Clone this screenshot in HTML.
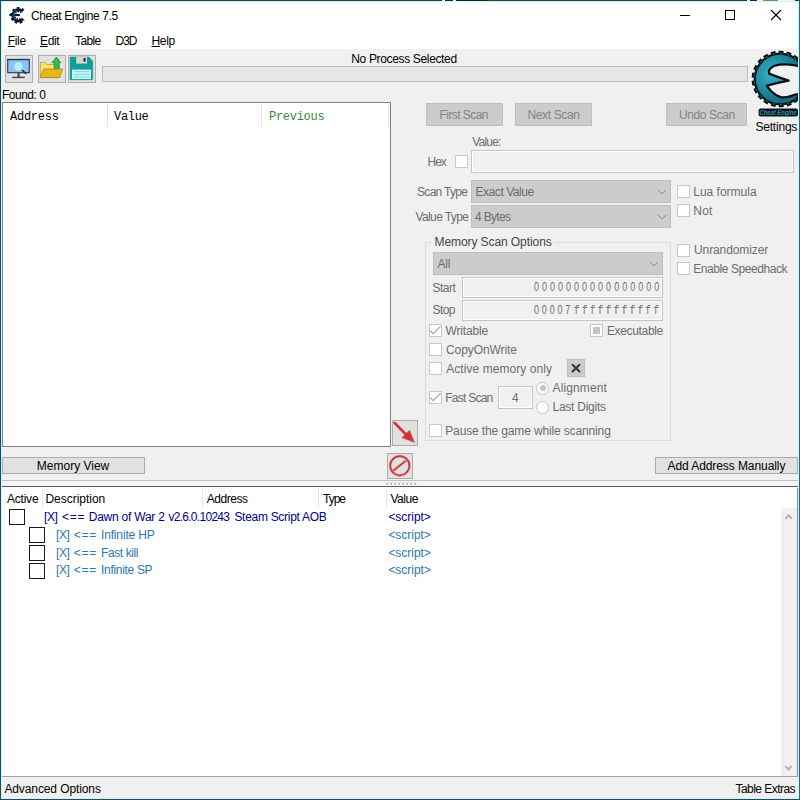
<!DOCTYPE html>
<html>
<head>
<meta charset="utf-8">
<title>Cheat Engine 7.5</title>
<style>
html,body{margin:0;padding:0;}
body{width:800px;height:800px;overflow:hidden;background:#f0f0f0;position:relative;
 font-family:"Liberation Sans",sans-serif;font-size:12px;color:#000;}
.a{position:absolute;white-space:nowrap;box-sizing:border-box;}
.t{position:absolute;white-space:nowrap;line-height:16px;height:16px;font-size:12px;}
.btn{position:absolute;box-sizing:border-box;background:#e1e1e1;border:1px solid #adadad;}
.dbtn{position:absolute;box-sizing:border-box;background:#cccccc;border:1px solid #bfbfbf;}
.cb{position:absolute;box-sizing:border-box;width:13px;height:13px;background:#fff;border:1px solid #c8c8c8;}
.cbk{position:absolute;box-sizing:border-box;width:16px;height:16px;background:#fff;border:1px solid #1c1c1c;}
.combo{position:absolute;box-sizing:border-box;background:#cccccc;border:1px solid #bfbfbf;}
.inp{position:absolute;box-sizing:border-box;background:#f0f0f0;border:1px solid #c4c4c4;box-shadow:inset 0 0 0 1px #fff;}
.mono{font-family:"Liberation Mono",monospace;}
.sep{position:absolute;width:1px;background:#e5e5e5;}
svg{position:absolute;overflow:visible;}
u{text-decoration-thickness:1px;text-underline-offset:1px;}
</style>
</head>
<body>
<!-- title + menu background -->
<div class="a" style="left:0;top:0;width:800px;height:49px;background:#fff;"></div>

<!-- toolbar -->
<div class="btn" style="left:5px;top:55px;width:28px;height:28px;"></div>
<div class="btn" style="left:38px;top:55px;width:28px;height:28px;"></div>
<div class="btn" style="left:68px;top:55px;width:28px;height:28px;"></div>
<div class="a" style="left:102px;top:66px;width:646px;height:16px;background:#e6e6e6;border:1px solid #bcbcbc;"></div>

<!-- found list -->
<div class="a" style="left:2px;top:102px;width:389px;height:345px;background:#fff;border:1px solid #828282;"></div>
<div class="sep" style="left:107px;top:104px;height:23px;"></div>
<div class="sep" style="left:261px;top:104px;height:23px;"></div>
<div class="sep" style="left:388px;top:104px;height:23px;"></div>

<!-- scan buttons -->
<div class="dbtn" style="left:426px;top:103px;width:77px;height:23px;"></div>
<div class="dbtn" style="left:515px;top:103px;width:77px;height:23px;"></div>
<div class="dbtn" style="left:666px;top:103px;width:81px;height:23px;"></div>

<div class="cb" style="left:455px;top:155px;"></div>
<div class="inp" style="left:471px;top:150px;width:323px;height:23px;"></div>

<div class="combo" style="left:471px;top:180px;width:200px;height:23px;"></div>
<div class="combo" style="left:471px;top:205px;width:200px;height:23px;"></div>

<div class="cb" style="left:677px;top:185px;"></div>
<div class="cb" style="left:677px;top:204px;"></div>
<div class="cb" style="left:677px;top:244px;"></div>
<div class="cb" style="left:677px;top:262px;"></div>

<!-- group box -->
<div class="a" style="left:425px;top:242px;width:246px;height:199px;border:1px solid #dcdcdc;"></div>
<div class="a" style="left:432px;top:238px;width:122px;height:10px;background:#f0f0f0;"></div>
<div class="combo" style="left:433px;top:252px;width:230px;height:23px;"></div>
<div class="inp" style="left:462px;top:277px;width:201px;height:21px;"></div>
<div class="inp" style="left:462px;top:300px;width:201px;height:21px;"></div>

<div class="cb" style="left:429px;top:324px;"></div>
<div class="cb" style="left:590px;top:324px;"></div>
<div class="a" style="left:593px;top:327px;width:7px;height:7px;background:#c4c4c4;"></div>
<div class="cb" style="left:429px;top:343px;"></div>
<div class="cb" style="left:429px;top:362px;"></div>
<div class="dbtn" style="left:567px;top:359px;width:18px;height:18px;"></div>
<div class="cb" style="left:429px;top:391px;"></div>
<div class="inp" style="left:498px;top:386px;width:35px;height:23px;"></div>
<div class="cb" style="left:536px;top:381.5px;border-radius:50%;"></div>
<div class="a" style="left:539.5px;top:385px;width:6px;height:6px;border-radius:50%;background:#c4c4c4;"></div>
<div class="cb" style="left:536px;top:400.5px;border-radius:50%;"></div>
<div class="cb" style="left:429px;top:424px;"></div>

<div class="btn" style="left:392px;top:420px;width:26px;height:26px;"></div>
<div class="btn" style="left:387px;top:453px;width:26px;height:26px;"></div>

<div class="btn" style="left:2px;top:457px;width:143px;height:17px;"></div>
<div class="btn" style="left:655px;top:457px;width:143px;height:17px;"></div>

<!-- splitter + address list -->
<div class="a" style="left:2px;top:480px;width:796px;height:1px;background:#c4c4c4;"></div>
<div class="a" style="left:2px;top:481px;width:796px;height:5px;background:#f5f5f5;"></div>
<div class="a" style="left:2px;top:486px;width:796px;height:290px;background:#fff;border-top:1px solid #5a5a5a;"></div>
<div class="a" style="left:797px;top:488px;width:1px;height:288px;background:#8a8a8a;"></div>
<div class="sep" style="left:42px;top:489px;height:18px;"></div>
<div class="sep" style="left:202px;top:489px;height:18px;"></div>
<div class="sep" style="left:318px;top:489px;height:18px;"></div>
<div class="sep" style="left:386px;top:489px;height:18px;"></div>

<div class="cbk" style="left:9px;top:509px;"></div>
<div class="cbk" style="left:29px;top:527px;"></div>
<div class="cbk" style="left:29px;top:545px;"></div>
<div class="cbk" style="left:29px;top:563px;"></div>

<div class="a" style="left:781px;top:508px;width:16px;height:268px;background:#f0f0f0;"></div>

<!-- bottom bar -->
<div class="a" style="left:2px;top:776px;width:796px;height:1px;background:#a0a0a0;"></div>

<!-- title icon -->
<svg style="left:8px;top:7px" width="17" height="17" viewBox="0 0 17 17">
 <path d="M14.6 4.4 A5.7 5.7 0 1 0 15 11.9" fill="none" stroke="#0c1c2a" stroke-width="3"/>
 <path d="M14.6 4.4 A5.7 5.7 0 1 0 15 11.9" fill="none" stroke="#0c1c2a" stroke-width="5.4" stroke-dasharray="1.9 1.9" stroke-dashoffset="0"/>
 <path d="M8 3.6 A5.2 5.2 0 0 0 8 12.6" fill="none" stroke="#1f5a82" stroke-width="1.1"/>
 <path d="M1.4 8 H11.9" stroke="#0c1c2a" stroke-width="2.1"/>
 <path d="M4 8 H7" stroke="#1f5a82" stroke-width="1.2"/>
</svg>
<!-- window controls -->
<svg style="left:675px;top:5px" width="115" height="22" viewBox="0 0 115 22">
 <path d="M5 10.5 H15" stroke="#000" stroke-width="1"/>
 <rect x="50.5" y="5.5" width="9" height="9" fill="none" stroke="#000" stroke-width="1"/>
 <path d="M96 5 L106 15 M106 5 L96 15" stroke="#000" stroke-width="1.1"/>
</svg>

<!-- toolbar icon 1: monitor w/ magnifier -->
<svg style="left:5px;top:55px" width="28" height="28" viewBox="5 55 28 28">
 <rect x="7.7" y="59.5" width="21.6" height="13.2" fill="#8cc4f4" stroke="#2a3a4c" stroke-width="1.1"/>
 <rect x="7.2" y="58.9" width="22.6" height="1.3" fill="#2a3a4c"/>
 <rect x="17.4" y="73" width="2.4" height="4" fill="#555"/>
 <rect x="12.2" y="76.7" width="12.6" height="1.4" fill="#444"/>
 <path d="M22 70 L25.8 73.4" stroke="#10304a" stroke-width="1.5" stroke-linecap="round"/>
 <circle cx="18.5" cy="66.4" r="4.8" fill="#b8ecfc" stroke="#80bcec" stroke-width="0.8"/>
</svg>
<!-- toolbar icon 2: folder + green arrow -->
<svg style="left:38px;top:55px" width="28" height="28" viewBox="38 55 28 28">
 <path d="M40.3 77.4 V62.4 H45.2 L46.8 64.4 H58.5 V77.4 Z" fill="#fce46c" stroke="#b09020" stroke-width="0.7"/>
 <path d="M52 62.6 L56.4 57 L60.8 62.6 H59.2 V69.2 H54.2 V62.6 Z" fill="#2cc044" stroke="#1a8a30" stroke-width="0.8" stroke-linejoin="round"/>
 <path d="M43.8 69 H62.6 L59.6 77.6 H40.3 Z" fill="#e8b818" stroke="#a07810" stroke-width="0.7" stroke-linejoin="round"/>
</svg>
<!-- toolbar icon 3: floppy -->
<svg style="left:68px;top:55px" width="28" height="28" viewBox="68 55 28 28">
 <path d="M70 57 H88.8 L92.7 61 V79.7 H70 Z" fill="#10a098" stroke="#109088" stroke-width="0.5"/>
 <rect x="76.2" y="57" width="10.8" height="6.6" fill="#d0d8d8"/>
 <rect x="83.6" y="58" width="1.9" height="3.7" rx="0.6" fill="#101820"/>
 <rect x="72" y="69.6" width="19" height="9.4" fill="#c4fcfc"/>
 <path d="M74 71.7 H89 M74 74.4 H89 M74 77 H89" stroke="#78c8c8" stroke-width="0.9"/>
</svg>

<!-- CE logo -->
<svg style="left:750px;top:49px" width="48" height="72" viewBox="750 49 48 72">
 <defs>
  <radialGradient id="lg" gradientUnits="userSpaceOnUse" cx="772" cy="74" r="30">
   <stop offset="0" stop-color="#3eb2c6"/><stop offset="0.45" stop-color="#2494a8"/><stop offset="1" stop-color="#146c80"/>
  </radialGradient>
  <clipPath id="lc"><rect x="750" y="49" width="48" height="72"/></clipPath>
 </defs>
 <g clip-path="url(#lc)">
  <path d="M801 64.5 A25.6 25.6 0 1 0 801 93.5" fill="none" stroke="#0a1418" stroke-width="5.4" stroke-dasharray="4.5 3.0" stroke-dashoffset="1.2" stroke-linejoin="round"/>
  <path d="M801 64.5 A25.4 25.4 0 1 0 801 93.5 L799 93.9 L796.2 94.3 Q788 97.6 781.2 97.4 Q776 96 771 91 L767.3 86.6 L767 85.6 Q778 82.6 788.6 80.6 Q778 77 769.4 73.8 L768.9 71 Q769.6 68.4 775 65.6 Q781 63.8 790 64.6 L799 66 Z" fill="url(#lg)" stroke="#0a1418" stroke-width="2.3" stroke-linejoin="round"/>
  <path d="M801 64.5 A25.6 25.6 0 1 0 801 93.5" fill="none" stroke="#1a7c90" stroke-width="1.4" stroke-dasharray="2.3 5.2" stroke-dashoffset="0.1" opacity="0.7"/>
 </g>
 <rect x="758.6" y="108.4" width="39.4" height="8" rx="2.2" fill="#0a1418"/>
 <text x="759.6" y="114.8" font-family="Liberation Sans, sans-serif" font-size="6.8" font-weight="bold" font-style="italic" fill="#2e8e9e" textLength="37" lengthAdjust="spacingAndGlyphs">Cheat Engine</text>
</svg>

<!-- combobox chevrons -->
<svg style="left:657px;top:189px" width="10" height="6" viewBox="0 0 10 6"><path d="M1 1 L5 5 L9 1" fill="none" stroke="#8c8c8c" stroke-width="1"/></svg>
<svg style="left:657px;top:214px" width="10" height="6" viewBox="0 0 10 6"><path d="M1 1 L5 5 L9 1" fill="none" stroke="#8c8c8c" stroke-width="1"/></svg>
<svg style="left:649px;top:261px" width="10" height="6" viewBox="0 0 10 6"><path d="M1 1 L5 5 L9 1" fill="none" stroke="#8c8c8c" stroke-width="1"/></svg>

<!-- check marks -->
<svg style="left:429px;top:324px" width="13" height="13" viewBox="0 0 13 13"><path d="M1.2 6.6 L4.3 9.7 L11.6 2.3" fill="none" stroke="#a4a4a4" stroke-width="1.2"/></svg>
<svg style="left:429px;top:391px" width="13" height="13" viewBox="0 0 13 13"><path d="M1.2 6.6 L4.3 9.7 L11.6 2.3" fill="none" stroke="#a4a4a4" stroke-width="1.2"/></svg>

<!-- X button glyph -->
<svg style="left:567px;top:359px" width="18" height="18" viewBox="0 0 18 18"><path d="M5 5.2 L13 13 M13 5.2 L5 13" stroke="#333" stroke-width="2"/></svg>

<!-- red arrow -->
<svg style="left:392px;top:420px" width="26" height="26" viewBox="392 420 26 26">
 <path d="M394.6 422.8 L407 435.5" stroke="#d0323a" stroke-width="2.6" stroke-linecap="round"/>
 <path d="M414.6 442.6 L409.6 430 L401.8 437.8 Z" fill="#d0323a" stroke="#e06068" stroke-width="0.5"/>
</svg>
<!-- no entry -->
<svg style="left:387px;top:453px" width="26" height="26" viewBox="387 453 26 26">
 <circle cx="399.8" cy="465.7" r="9.6" fill="none" stroke="#f4a8a8" stroke-width="2.8"/>
 <path d="M393.4 470.7 L406 460.6" stroke="#f4a8a8" stroke-width="2.6"/>
 <circle cx="399.8" cy="465.7" r="9.6" fill="none" stroke="#bc3c46" stroke-width="1.7"/>
 <path d="M393.4 470.7 L406 460.6" stroke="#bc3c46" stroke-width="1.6"/>
</svg>

<!-- splitter grip -->
<svg style="left:386px;top:482px" width="32" height="4" viewBox="0 0 32 4">
 <path d="M0.5 2.5 L2 1 M4.5 2.5 L6 1 M8.5 2.5 L10 1 M12.5 2.5 L14 1 M16.5 2.5 L18 1 M20.5 2.5 L22 1 M24.5 2.5 L26 1 M28.5 2.5 L30 1" stroke="#9a9a9a" stroke-width="1.1"/>
</svg>

<!-- scrollbar arrows -->
<svg style="left:784px;top:513px" width="10" height="8" viewBox="784 513 10 8"><path d="M785.4 518.9 L788.6 515.3 L791.8 518.9" fill="none" stroke="#b2b2b2" stroke-width="1.9"/></svg>
<svg style="left:784px;top:763px" width="10" height="8" viewBox="784 763 10 8"><path d="M785.4 766 L788.5 769.5 L791.6 766" fill="none" stroke="#b2b2b2" stroke-width="1.9"/></svg>

<div class="t" id="title" style="left:31.00px;top:8px;letter-spacing:-0.367px;">Cheat Engine 7.5</div>
<div class="t" id="m1" style="left:7.75px;top:33px;letter-spacing:-0.333px;"><u>F</u>ile</div>
<div class="t" id="m2" style="left:40.00px;top:33px;letter-spacing:-0.333px;"><u>E</u>dit</div>
<div class="t" id="m3" style="left:75.00px;top:33px;letter-spacing:-0.625px;">Table</div>
<div class="t" id="m4" style="left:115.50px;top:33px;letter-spacing:-1.000px;">D3D</div>
<div class="t" id="m5" style="left:151.50px;top:33px;letter-spacing:-0.333px;"><u>H</u>elp</div>
<div class="t" id="nps" style="left:351.25px;top:51px;letter-spacing:-0.344px;">No Process Selected</div>
<div class="t" id="found" style="left:2.00px;top:87px;letter-spacing:-0.500px;">Found: 0</div>
<div class="t mono" id="h1" style="left:10.00px;top:109px;letter-spacing:-0.250px;">Address</div>
<div class="t mono" id="h2" style="left:114.00px;top:109px;letter-spacing:-0.300px;">Value</div>
<div class="t mono" id="h3" style="left:269.00px;top:109px;letter-spacing:-0.286px;color:#3a8a3a;">Previous</div>
<div class="t" id="b1" style="left:439.50px;top:107px;letter-spacing:-0.556px;color:#838383;">First Scan</div>
<div class="t" id="b2" style="left:527.50px;top:107px;letter-spacing:-0.375px;color:#838383;">Next Scan</div>
<div class="t" id="b3" style="left:679.00px;top:107px;letter-spacing:-0.388px;color:#838383;">Undo Scan</div>
<div class="t" id="settings" style="left:755.50px;top:119px;letter-spacing:-0.214px;">Settings</div>
<div class="t" id="lv" style="left:472.25px;top:134px;letter-spacing:-0.800px;color:#6d6d6d;">Value:</div>
<div class="t" id="lhex" style="left:427.50px;top:154px;letter-spacing:-1.000px;color:#6d6d6d;">Hex</div>
<div class="t" id="lst" style="left:417.00px;top:184px;letter-spacing:-0.688px;color:#6d6d6d;">Scan Type</div>
<div class="t" id="cst" style="left:475.50px;top:184px;letter-spacing:-0.450px;color:#6d6d6d;">Exact Value</div>
<div class="t" id="lvt" style="left:415.50px;top:209px;letter-spacing:-0.611px;color:#6d6d6d;">Value Type</div>
<div class="t" id="cvt" style="left:475.00px;top:209px;letter-spacing:-0.683px;color:#6d6d6d;">4 Bytes</div>
<div class="t" id="llua" style="left:693.25px;top:184px;color:#6d6d6d;">Lua formula</div>
<div class="t" id="lnot" style="left:693.25px;top:203px;letter-spacing:0.250px;color:#6d6d6d;">Not</div>
<div class="t" id="lunr" style="left:694.00px;top:242px;letter-spacing:-0.100px;color:#6d6d6d;">Unrandomizer</div>
<div class="t" id="lspd" style="left:693.25px;top:261px;letter-spacing:-0.433px;color:#6d6d6d;">Enable Speedhack</div>
<div class="t" id="lmso" style="left:434.50px;top:234px;letter-spacing:-0.083px;color:#444;">Memory Scan Options</div>
<div class="t" id="call" style="left:437.50px;top:256px;letter-spacing:-0.250px;color:#6d6d6d;">All</div>
<div class="t" id="lstart" style="left:432.50px;top:280px;letter-spacing:-0.512px;color:#6d6d6d;">Start</div>
<div class="t" id="vstart" style="left:533.75px;top:279px;letter-spacing:4.155px;color:#6d6d6d;transform:scaleX(0.74);transform-origin:0 0;">0000000000000000</div>
<div class="t" id="lstop" style="left:432.50px;top:302px;letter-spacing:-0.567px;color:#6d6d6d;">Stop</div>
<div class="t" id="vstop" style="left:533.75px;top:302px;letter-spacing:3.905px;color:#6d6d6d;transform:scaleX(0.74);transform-origin:0 0;">00007</div>
<div class="t mono" id="vstopf" style="left:573.60px;top:303px;letter-spacing:3.489px;color:#6d6d6d;font-size:12.6px;transform:scaleX(0.72);transform-origin:0 0;">fffffffffff</div>
<div class="t" id="lwr" style="left:445.45px;top:323px;letter-spacing:-0.143px;color:#6d6d6d;">Writable</div>
<div class="t" id="lex" style="left:606.90px;top:323px;letter-spacing:-0.333px;color:#6d6d6d;">Executable</div>
<div class="t" id="lcow" style="left:446.00px;top:342px;letter-spacing:-0.080px;color:#6d6d6d;">CopyOnWrite</div>
<div class="t" id="lamo" style="left:446.25px;top:361px;letter-spacing:0.059px;color:#6d6d6d;">Active memory only</div>
<div class="t" id="lfs" style="left:445.25px;top:390px;letter-spacing:-0.750px;color:#6d6d6d;">Fast Scan</div>
<div class="t" id="v4" style="left:512.00px;top:390px;color:#6d6d6d;">4</div>
<div class="t" id="lal" style="left:552.50px;top:380px;letter-spacing:0.125px;color:#6d6d6d;">Alignment</div>
<div class="t" id="lld" style="left:552.50px;top:399px;letter-spacing:-0.250px;color:#6d6d6d;">Last Digits</div>
<div class="t" id="lpg" style="left:445.25px;top:423px;letter-spacing:-0.139px;color:#6d6d6d;">Pause the game while scanning</div>
<div class="t" id="bmv" style="left:36.80px;top:458px;">Memory View</div>
<div class="t" id="baa" style="left:667.50px;top:458px;letter-spacing:-0.079px;">Add Address Manually</div>
<div class="t" id="c1" style="left:6.90px;top:491px;letter-spacing:-0.200px;">Active</div>
<div class="t" id="c2" style="left:45.40px;top:491px;letter-spacing:-0.012px;">Description</div>
<div class="t" id="c3" style="left:206.70px;top:491px;letter-spacing:-0.442px;">Address</div>
<div class="t" id="c4" style="left:323.00px;top:491px;letter-spacing:-1.000px;">Type</div>
<div class="t" id="c5" style="left:390.50px;top:491px;letter-spacing:-0.500px;">Value</div>
<div class="t" id="r1a" style="left:44.00px;top:509px;letter-spacing:-0.400px;color:#00007f;">[X]</div>
<div class="t" id="r1b" style="left:62.00px;top:509px;letter-spacing:0.725px;color:#00007f;">&lt;==</div>
<div class="t" id="r1c" style="left:88.75px;top:509px;letter-spacing:-0.233px;color:#00007f;">Dawn of War 2</div>
<div class="t" id="r1d" style="left:168.40px;top:509px;letter-spacing:-0.709px;color:#00007f;">v2.6.0.10243</div>
<div class="t" id="r1e" style="left:234.40px;top:509px;letter-spacing:-0.293px;color:#00007f;">Steam Script AOB</div>
<div class="t" id="r2a" style="left:56.00px;top:527px;letter-spacing:-0.400px;color:#2b78aa;">[X]</div>
<div class="t" id="r2b" style="left:73.80px;top:527px;letter-spacing:0.700px;color:#2b78aa;">&lt;==</div>
<div class="t" id="r2c" style="left:101.00px;top:527px;letter-spacing:-0.160px;color:#2b78aa;">Infinite HP</div>
<div class="t" id="r3a" style="left:56.00px;top:545px;letter-spacing:-0.400px;color:#2b78aa;">[X]</div>
<div class="t" id="r3b" style="left:73.80px;top:545px;letter-spacing:0.700px;color:#2b78aa;">&lt;==</div>
<div class="t" id="r3c" style="left:101.00px;top:545px;letter-spacing:-0.400px;color:#2b78aa;">Fast kill</div>
<div class="t" id="r4a" style="left:56.00px;top:562px;letter-spacing:-0.400px;color:#2b78aa;">[X]</div>
<div class="t" id="r4b" style="left:73.80px;top:562px;letter-spacing:0.700px;color:#2b78aa;">&lt;==</div>
<div class="t" id="r4c" style="left:101.00px;top:562px;letter-spacing:-0.310px;color:#2b78aa;">Infinite SP</div>
<div class="t" id="s1" style="left:388.40px;top:509px;letter-spacing:-0.034px;color:#00007f;">&lt;script&gt;</div>
<div class="t" id="s2" style="left:388.40px;top:527px;letter-spacing:-0.034px;color:#2b78aa;">&lt;script&gt;</div>
<div class="t" id="s3" style="left:388.40px;top:545px;letter-spacing:-0.034px;color:#2b78aa;">&lt;script&gt;</div>
<div class="t" id="s4" style="left:388.40px;top:562px;letter-spacing:-0.034px;color:#2b78aa;">&lt;script&gt;</div>
<div class="t" id="adv" style="left:4.40px;top:781px;letter-spacing:-0.104px;">Advanced Options</div>
<div class="t" id="tex" style="left:735.50px;top:781px;letter-spacing:-0.545px;">Table Extras</div>

<!-- window frame -->
<div class="a" style="left:1px;top:1px;width:798px;height:798px;border:1px solid #d2f4f8;"></div>
<div class="a" style="left:0;top:0;width:800px;height:800px;border:1px solid #17505c;border-top-color:#17454e;border-right-color:#1e6e7a;"></div>
<div class="a" style="left:442px;top:0;width:3px;height:1px;background:#e6f2f4;"></div><div class="a" style="left:445px;top:0;width:8px;height:1px;background:#1c2850;"></div><div class="a" style="left:453px;top:0;width:3px;height:1px;background:#e6f2f4;"></div><div class="a" style="left:456px;top:0;width:32px;height:1px;background:#0e2c34;"></div><div class="a" style="left:747px;top:0;width:3px;height:1px;background:#e0f0f2;"></div><div class="a" style="left:750px;top:0;width:7px;height:1px;background:#222c52;"></div><div class="a" style="left:757px;top:0;width:6px;height:1px;background:#e6f2f2;"></div><div class="a" style="left:763px;top:0;width:15px;height:1px;background:#8a8a48;"></div><div class="a" style="left:778px;top:0;width:17px;height:1px;background:#e6f6f8;"></div>
</body>
</html>
